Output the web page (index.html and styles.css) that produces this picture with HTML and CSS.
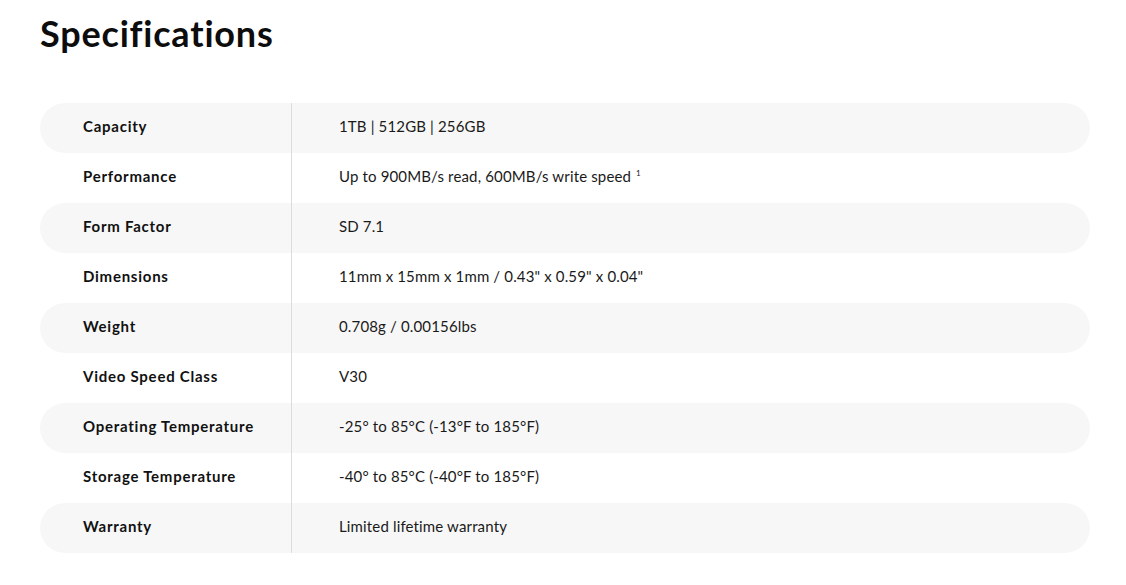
FILE: index.html
```html
<!DOCTYPE html>
<html>
<head>
<meta charset="utf-8">
<link rel="stylesheet" href="styles.css">
</head>
<body>
<section class="specs">
  <h1 class="title">Specifications</h1>
  <div class="table">
    <div class="row alt"><div class="label">Capacity</div><div class="value">1TB | 512GB | 256GB</div></div>
    <div class="row"><div class="label">Performance</div><div class="value">Up to 900MB/s read, 600MB/s write speed <sup>1</sup></div></div>
    <div class="row alt"><div class="label">Form Factor</div><div class="value">SD 7.1</div></div>
    <div class="row"><div class="label">Dimensions</div><div class="value">11mm x 15mm x 1mm / 0.43" x 0.59" x 0.04"</div></div>
    <div class="row alt"><div class="label">Weight</div><div class="value">0.708g / 0.00156lbs</div></div>
    <div class="row"><div class="label">Video Speed Class</div><div class="value">V30</div></div>
    <div class="row alt"><div class="label">Operating Temperature</div><div class="value">-25° to 85°C (-13°F to 185°F)</div></div>
    <div class="row"><div class="label">Storage Temperature</div><div class="value">-40° to 85°C (-40°F to 185°F)</div></div>
    <div class="row alt"><div class="label">Warranty</div><div class="value">Limited lifetime warranty</div></div>
  </div>
</section>
</body>
</html>
```
FILE: styles.css
```css
html, body {
  margin: 0;
  padding: 0;
  background: #ffffff;
}
body {
  font-family: "Lato", "Open Sans", sans-serif;
  color: #111111;
}
.specs {
  padding: 13px 36px 0 40px;
}
.title {
  margin: 0;
  font-size: 36px;
  font-weight: 700;
  line-height: 40px;
  letter-spacing: 0.8px;
  color: #0d0d0d;
}
.table {
  margin-top: 50px;
  display: flex;
  flex-direction: column;
}
.row {
  display: grid;
  grid-template-columns: 251px 1fr;
  height: 50px;
  border-radius: 25px;
}
.row.alt {
  background: #f7f7f7;
}
.label {
  display: flex;
  align-items: center;
  padding-left: 43px;
  padding-bottom: 5px;
  font-size: 15px;
  font-weight: 700;
  letter-spacing: 0.75px;
  color: #111111;
}
.value {
  display: flex;
  align-items: center;
  padding-left: 47px;
  padding-bottom: 5px;
  border-left: 1px solid #dcdcdc;
  font-size: 15px;
  letter-spacing: 0.15px;
  color: #1a1a1a;
}
.value sup {
  font-size: 8px;
  margin-left: 5px;
  align-self: flex-start;
  margin-top: 15px;
}
```
